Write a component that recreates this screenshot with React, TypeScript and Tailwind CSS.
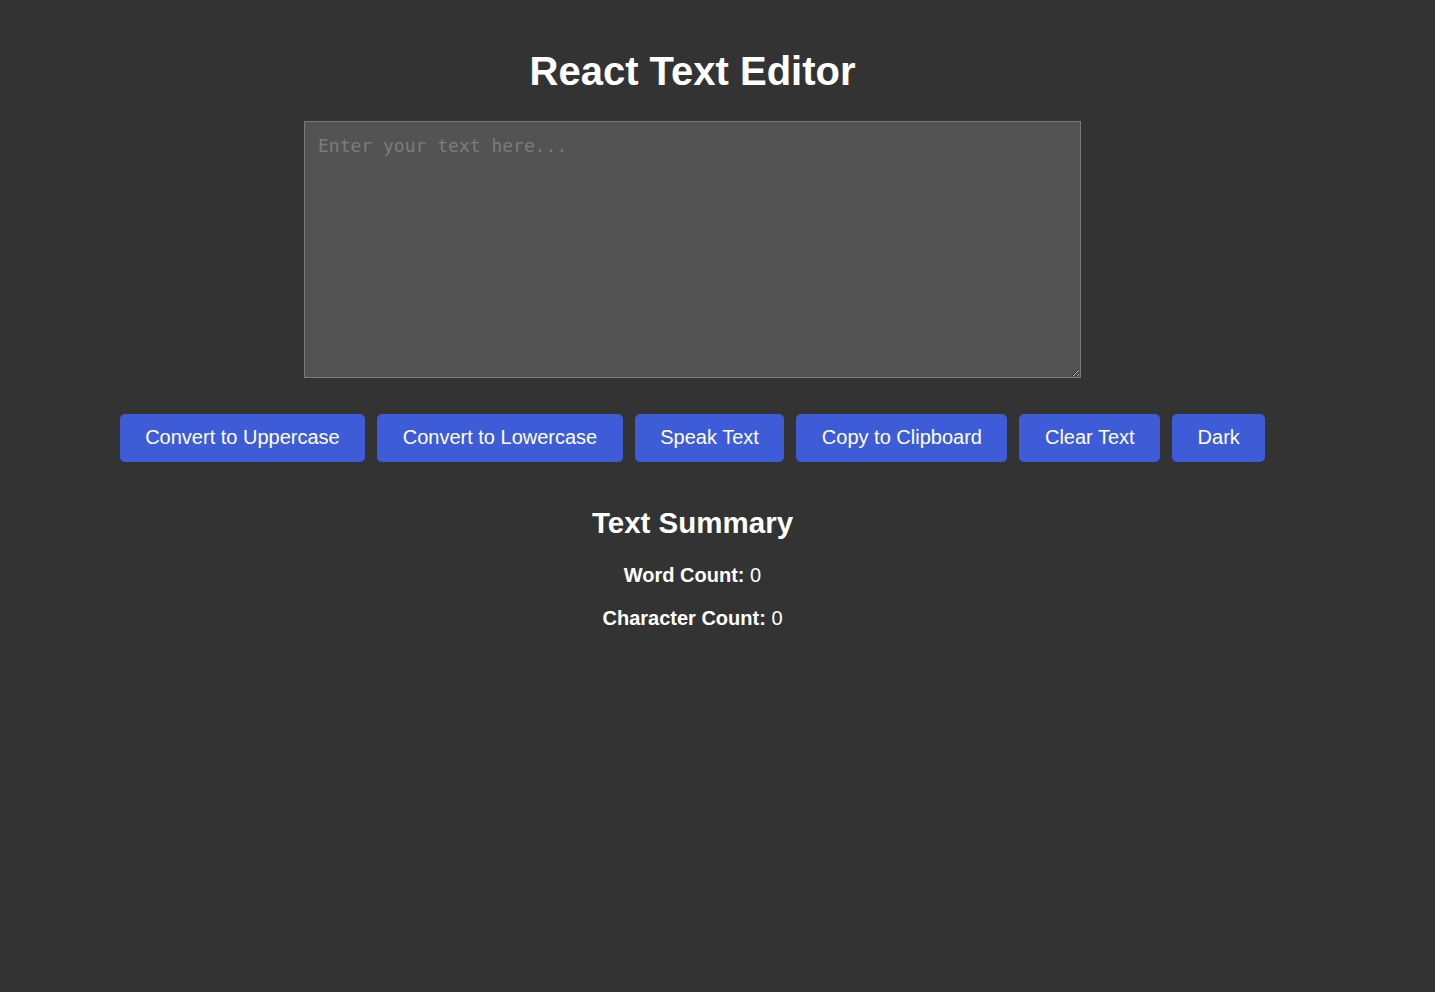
import { useState } from "react";

const actions = [
  "Convert to Uppercase",
  "Convert to Lowercase",
  "Speak Text",
  "Copy to Clipboard",
  "Clear Text",
  "Dark",
];

export default function App() {
  const [text, setText] = useState("");
  const words = text.trim() === "" ? 0 : text.trim().split(/\s+/).length;

  return (
    <div className="min-h-screen bg-[#333333] text-white font-['Liberation_Sans',Arial,sans-serif]">
      <div className="flex flex-col items-center pr-[50px] pt-[48px]">
        <h1 className="text-[40px] font-bold leading-[46px]">React Text Editor</h1>

        <textarea
          value={text}
          onChange={(e) => setText(e.target.value)}
          placeholder="Enter your text here..."
          className="mt-[27px] h-[257px] w-[777px] border border-[#7a7a7a] bg-[#535353] px-[13px] py-[12px] font-['DejaVu_Sans_Mono',monospace] text-[18px] leading-[24px] text-white outline-none placeholder:text-[#7c7c7c]"
        />

        {/* Buttons */}
        <div className="mt-[36px] flex flex-wrap justify-center gap-[12px]">
          {actions.map((a) => (
            <button
              key={a}
              className="h-[48px] rounded-[5px] bg-[#3e5bd8] px-[25.5px] pb-[2px] text-[20px] text-white"
            >
              {a}
            </button>
          ))}
        </div>

        <h2 className="mt-[44px] text-[29.5px] font-bold leading-[34px]">Text Summary</h2>
        <p className="mt-[24px] text-[20px] leading-[23px]">
          <span className="font-bold">Word Count:</span> {words}
        </p>
        <p className="mt-[20px] text-[20px] leading-[23px]">
          <span className="font-bold">Character Count:</span> {text.length}
        </p>
      </div>
    </div>
  );
}
